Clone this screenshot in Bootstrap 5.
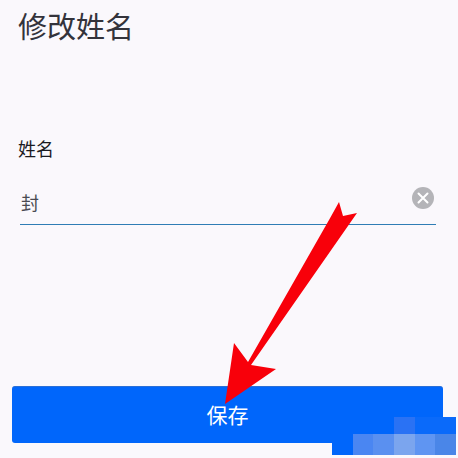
<!DOCTYPE html>
<html lang="zh">
<head>
<meta charset="utf-8">
<link href="https://cdn.jsdelivr.net/npm/bootstrap@5.3.0/dist/css/bootstrap.min.css" rel="stylesheet">
<style>
html,body{height:458px;overflow:hidden}
body{background:#faf8fc;font-family:"Noto Sans CJK SC","Liberation Sans",sans-serif;position:relative}
.pg{height:458px;padding:0 15px 15px 12px}
.ttl{font-size:29px;line-height:40px;font-weight:400;color:#33333b;margin:5px 0 0 6px}
.lbl{font-size:18px;line-height:24px;color:#1a1a1f;margin:91px 0 0 6px}
.fld{margin:25px 7px 0 8px;height:40px;border-bottom:1.5px solid #2f7db5;padding-bottom:5px}
.val{font-size:18px;line-height:30px;color:#4a4a52;margin-left:1px}
.clr{width:22px;height:22px;background:#b4b4b8;margin-top:-9px;margin-right:2px}
.sv{height:57px;background:#0066fb;color:#fff;font-size:21px;border-radius:3px;border:0;border-top:1px solid #2a6fd6}
.sv:hover{background:#0066fb;color:#fff}
.mz{position:absolute;left:332px;top:417px;width:124px;height:38px;display:grid;grid-template-columns:repeat(6,1fr);grid-template-rows:17px 21px}
.arw{position:absolute;left:0;top:0;pointer-events:none}
</style>
</head>
<body>
<div class="pg d-flex flex-column">
  <h1 class="ttl">修改姓名</h1>
  <div class="lbl">姓名</div>
  <div class="fld d-flex justify-content-between align-items-center">
    <span class="val">封</span>
    <span class="clr rounded-circle d-flex align-items-center justify-content-center">
      <svg width="12" height="12" viewBox="0 0 12 12"><path d="M1.5 1.5l9 9M10.5 1.5l-9 9" stroke="#fff" stroke-width="2" stroke-linecap="round"/></svg>
    </span>
  </div>
  <button type="button" class="btn sv w-100 mt-auto d-flex align-items-center justify-content-center">保存</button>
</div>
<div class="mz">
  <i style="background:#0066fb"></i><i style="background:#0066fb"></i><i style="background:#0066fb"></i><i style="background:#2a72f4"></i><i style="background:#0a6afa"></i><i style="background:#0a6afa"></i>
  <i style="background:#0066fb"></i><i style="background:#4a86f2"></i><i style="background:#5a90f0"></i><i style="background:#7ba5ee"></i><i style="background:#5f95f2"></i><i style="background:#4a86e8"></i>
</div>
<svg class="arw" width="458" height="458" viewBox="0 0 458 458"><polygon fill="#f8000a" points="339,202 343,216 357,213 251,365 276,369 225,404 234,343 248,362 329,220"/></svg>
<script src="https://cdn.jsdelivr.net/npm/bootstrap@5.3.0/dist/js/bootstrap.bundle.min.js"></script>
</body>
</html>
